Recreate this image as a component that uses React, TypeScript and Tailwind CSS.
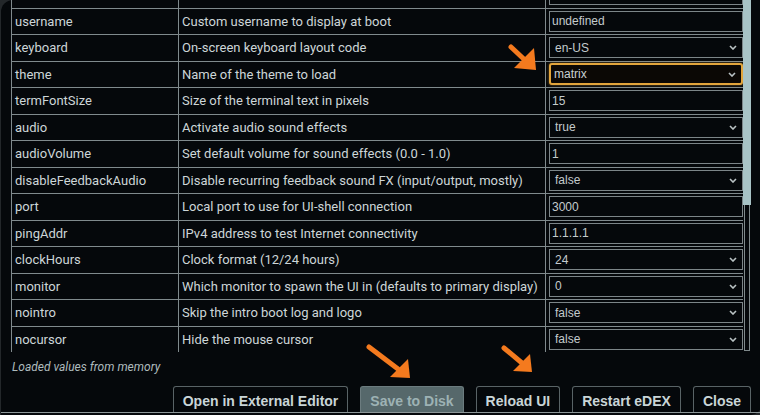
import React from "react";

type Row = { k: string; d: string; v: string; sel?: boolean; focus?: boolean };

const rows: Row[] = [
  { k: "", d: "", v: "", sel: false },
  { k: "username", d: "Custom username to display at boot", v: "undefined" },
  { k: "keyboard", d: "On-screen keyboard layout code", v: "en-US", sel: true },
  { k: "theme", d: "Name of the theme to load", v: "matrix", sel: true, focus: true },
  { k: "termFontSize", d: "Size of the terminal text in pixels", v: "15" },
  { k: "audio", d: "Activate audio sound effects", v: "true", sel: true },
  { k: "audioVolume", d: "Set default volume for sound effects (0.0 - 1.0)", v: "1" },
  { k: "disableFeedbackAudio", d: "Disable recurring feedback sound FX (input/output, mostly)", v: "false", sel: true },
  { k: "port", d: "Local port to use for UI-shell connection", v: "3000" },
  { k: "pingAddr", d: "IPv4 address to test Internet connectivity", v: "1.1.1.1" },
  { k: "clockHours", d: "Clock format (12/24 hours)", v: "24", sel: true },
  { k: "monitor", d: "Which monitor to spawn the UI in (defaults to primary display)", v: "0", sel: true },
  { k: "nointro", d: "Skip the intro boot log and logo", v: "false", sel: true },
  { k: "nocursor", d: "Hide the mouse cursor", v: "false", sel: true },
];

function Chevron() {
  return (
    <svg width="8" height="5" viewBox="0 0 8 5" className="ml-auto mr-[5px]">
      <polyline points="1,1 4,4 7,1" fill="none" stroke="#b9c2c4" strokeWidth="1.6" />
    </svg>
  );
}

function Field({ r }: { r: Row }) {
  if (r.focus) {
    return (
      <div className="flex items-center h-[22px] w-full border-2 border-[#e2a53c] rounded-[3px] bg-[#0b0805] pl-[3px] text-[12px] text-[#c9d0d2] shadow-[0_0_3px_rgba(226,165,60,0.5)]">
        <span>{r.v}</span>
        <Chevron />
      </div>
    );
  }
  return (
    <div
      className={
        "flex items-center h-[21px] w-full border border-[#7c8588] bg-[#05080b] text-[12px] text-[#c4cbcd] " +
        (r.sel ? "pl-[5px]" : "pl-[2px]")
      }
    >
      <span>{r.v}</span>
      {r.sel ? <Chevron /> : null}
    </div>
  );
}

function Btn({ label, active }: { label: string; active?: boolean }) {
  return (
    <div
      className={
        "h-[27px] px-[9px] flex items-start pt-[4px] border border-b-0 rounded-t-[3px] text-[14px] font-bold whitespace-nowrap " +
        (active
          ? "bg-[#56686b] border-[#6c7c7f] text-[#9db2b4]"
          : "bg-[#05080b] border-[#596366] text-[#c9d5d7]")
      }
      style={{ fontFamily: '"Liberation Sans", Arial, sans-serif' }}
    >
      {label}
    </div>
  );
}

function Arrows() {
  const c = "#f47a1e";
  return (
    <svg className="absolute inset-0 pointer-events-none" width="760" height="415" viewBox="0 0 760 415">
      <line x1="511" y1="47" x2="527" y2="62" stroke={c} strokeWidth="5" strokeLinecap="round" />
      <polygon points="536,70 514,68 534,48" fill={c} />
      <line x1="369" y1="347" x2="398" y2="369" stroke={c} strokeWidth="5" strokeLinecap="round" />
      <polygon points="410,378 390,377 408,359" fill={c} />
      <line x1="504" y1="348" x2="522" y2="363" stroke={c} strokeWidth="5" strokeLinecap="round" />
      <polygon points="532,372 513,371 530,354" fill={c} />
    </svg>
  );
}

export default function App() {
  return (
    <div className="w-[760px] h-[415px] bg-[#23272a] overflow-hidden relative">
      <div
        className="w-full h-full bg-[#05080b] rounded-tl-[12px] rounded-br-[10px] ml-[1px] flex flex-col"
        style={{ fontFamily: "Roboto, 'Liberation Sans', sans-serif" }}
      >
        <div className="flex h-[352px]">
          <div className="ml-[10px] w-[732px] h-[352px] overflow-hidden">
            <div className="mt-[-18px] border-l border-[#808a8d]">
              {rows.map((r, i) => (
                <div
                  key={i}
                  className="grid grid-cols-[167px_367px_198px] h-[26.5px] border-b border-[#808a8d] text-[13px] text-[#cdd6d8]"
                >
                  <div className="flex items-center pl-[3px] border-r border-[#808a8d] whitespace-nowrap">{r.k}</div>
                  <div className="flex items-center pl-[3px] border-r border-[#808a8d] whitespace-nowrap overflow-hidden">{r.d}</div>
                  <div className="flex items-center pl-[3px] pr-[1px]" style={{ fontFamily: '"Liberation Sans", Arial, sans-serif' }}>
                    <Field r={r} />
                  </div>
                </div>
              ))}
            </div>
          </div>
          <div className="w-[8px] flex flex-col">
            <div className="h-[205px] bg-[#a8c3c6]" />
            <div className="flex-1 border-x border-[#7f898b] mx-[1px] mb-[1px] border-b" />
          </div>
        </div>
        <div className="pl-[11px] pt-[6px] text-[12px] italic text-[#aebbbd] h-[34px]">Loaded values from memory</div>
        <div className="flex justify-end gap-[12px] pr-[10px] h-[26px]">
          <Btn label="Open in External Editor" />
          <Btn label="Save to Disk" active />
          <Btn label="Reload UI" />
          <Btn label="Restart eDEX" />
          <Btn label="Close" />
        </div>
        <div className="h-[1px] bg-[#8d9799]" />
      </div>
      <Arrows />
    </div>
  );
}
